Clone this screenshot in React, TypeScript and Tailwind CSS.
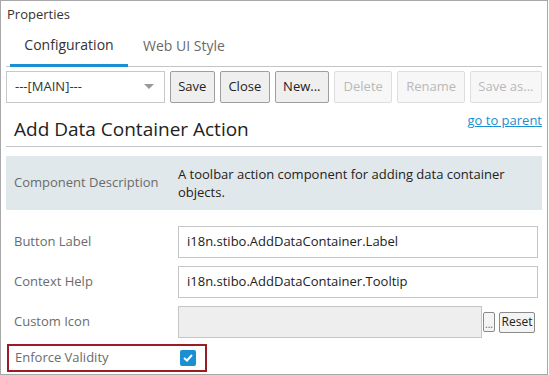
import React from "react";

const font = { fontFamily: '"Open Sans", "Noto Sans", sans-serif' };

const Btn = ({ label, w, disabled }: { label: string; w: string; disabled?: boolean }) => (
  <button
    className={
      (disabled
        ? "border-[#dedede] bg-[#f7f7f7] text-[#b9b9b9] "
        : "border-[#9e9e9e] bg-[#efefef] text-[#222] ") +
      w +
      " h-[32px] border rounded-[2px] text-[13px] whitespace-nowrap flex items-center justify-center"
    }
  >
    {label}
  </button>
);

const Field = ({ label, value }: { label: string; value: string }) => (
  <div className="flex items-center h-[32px] mb-[8px]">
    <div className="w-[172px] pl-[8px] text-[13px] text-[#6b6b6b]">{label}</div>
    <div className="w-[360px] h-[32px] border border-[#c6c6c6] flex items-center px-[8px] text-[13px] text-[#222]">
      {value}
    </div>
  </div>
);

export default function App() {
  return (
    <div style={font} className="w-[548px] h-[375px] border border-[#a8a8a8] bg-white flex flex-col overflow-hidden">
      <div className="pl-[6px] pt-[4px] text-[13px] text-[#333] leading-[18px]">Properties</div>

      {/* tabs */}
      <div className="mx-[5px] mt-[4px] flex border-b border-[#c4c4c4] h-[40px]">
        <div className="ml-[4px] w-[118px] pb-[3px] flex items-center justify-center text-[14px] text-[#333] border-b-[3px] border-[#1b8fd2] -mb-px">
          Configuration
        </div>
        <div className="w-[112px] pb-[3px] flex items-center justify-center text-[14px] text-[#6a6a6a]">Web UI Style</div>
      </div>

      {/* toolbar */}
      <div className="mx-[5px] mt-[4px] flex items-center gap-[5px]">
        <div className="w-[160px] h-[32px] border border-[#c8c8c8] flex items-center justify-between pl-[8px] pr-[10px] text-[13px] text-[#333]">
          <span>---[MAIN]---</span>
          <svg width="10" height="6" viewBox="0 0 10 6">
            <path d="M0 0 L10 0 L5 5 Z" fill="#999" />
          </svg>
        </div>
        <Btn label="Save" w="w-[46px]" />
        <Btn label="Close" w="w-[50px]" />
        <Btn label="New..." w="w-[55px]" />
        <Btn label="Delete" w="w-[59px]" disabled />
        <Btn label="Rename" w="w-[68px]" disabled />
        <Btn label="Save as..." w="w-[73px]" disabled />
      </div>

      {/* title */}
      <div className="mx-[5px] border-b border-[#c4c4c4] h-[44px] relative">
        <a className="absolute right-0 top-[8px] text-[13px] text-[#1b8fd2] underline">go to parent</a>
        <div className="absolute left-[8px] top-[14px] text-[19px] text-[#222] leading-[24px]">Add Data Container Action</div>
      </div>

      {/* description */}
      <div className="mx-[5px] mt-[9px] h-[54px] bg-[#e0e8ec] flex items-center">
        <div className="w-[172px] pl-[8px] text-[13px] text-[#6b6b6b]">Component Description</div>
        <div className="w-[350px] text-[13px] text-[#222] leading-[18px]">
          A toolbar action component for adding data container objects.
        </div>
      </div>

      <div className="mx-[5px] mt-[16px]">
        <Field label="Button Label" value="i18n.stibo.AddDataContainer.Label" />
        <Field label="Context Help" value="i18n.stibo.AddDataContainer.Tooltip" />
        <div className="flex items-center h-[32px]">
          <div className="w-[172px] pl-[8px] text-[13px] text-[#6b6b6b]">Custom Icon</div>
          <div className="w-[304px] h-[32px] border border-[#c6c6c6] bg-[#eeeeee]" />
          <button className="ml-[1px] w-[12px] h-[20px] border border-[#8a8a8a] bg-[#f4f4f4] rounded-[2px] text-[10px] text-[#1b6fb0] leading-[10px] flex items-end justify-center pb-[2px]">
            ...
          </button>
          <button className="ml-[4px] w-[36px] h-[21px] border border-[#8a8a8a] bg-[#f4f4f4] rounded-[2px] text-[12px] text-[#222] leading-[16px] flex items-center justify-center">
            Reset
          </button>
        </div>
      </div>

      <div className="ml-[6px] mt-[6px] w-[200px] h-[28px] border-[2px] border-[#9a1c24] flex items-center">
        <div className="w-[171px] pl-[6px] text-[13px] text-[#6b6b6b]">Enforce Validity</div>
        <div className="w-[16px] h-[16px] rounded-[2px] bg-[#1b8fd2] flex items-center justify-center">
          <svg width="10" height="8" viewBox="0 0 10 8">
            <path d="M1 4 L4 6.5 L9 1" stroke="white" strokeWidth="2" fill="none" />
          </svg>
        </div>
      </div>
    </div>
  );
}
